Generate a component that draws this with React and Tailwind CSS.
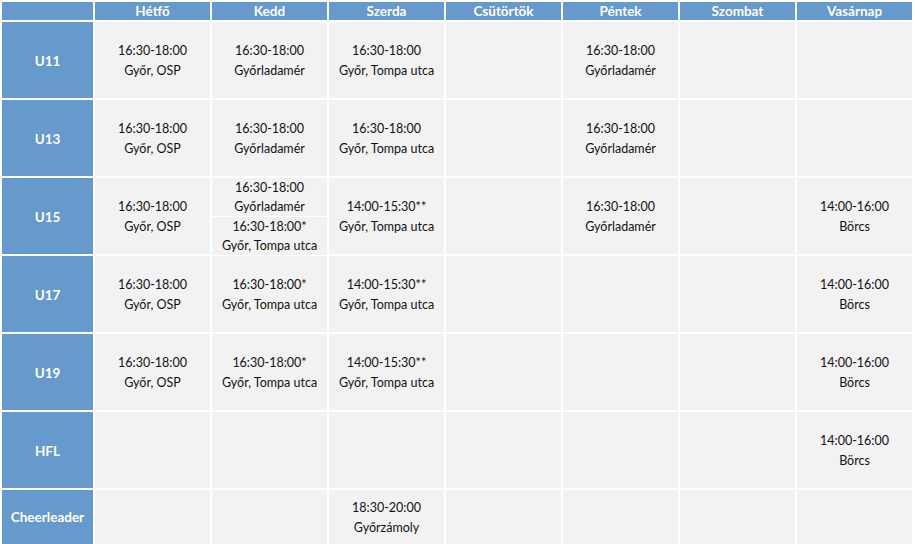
import React from "react";

const days = ["Hétfő", "Kedd", "Szerda", "Csütörtök", "Péntek", "Szombat", "Vasárnap"];

const OSP = ["16:30-18:00", "Győr, OSP"];
const LAD = ["16:30-18:00", "Győrladamér"];
const TOMPA = ["16:30-18:00", "Győr, Tompa utca"];
const TOMPA1 = ["16:30-18:00*", "Győr, Tompa utca"];
const TOMPA2 = ["14:00-15:30**", "Győr, Tompa utca"];
const BORCS = ["14:00-16:00", "Börcs"];

// each row: team + 7 day cells (null = empty, array of lines, or {split: [...]})
const rows = [
  { team: "U11", cells: [OSP, LAD, TOMPA, null, LAD, null, null] },
  { team: "U13", cells: [OSP, LAD, TOMPA, null, LAD, null, null] },
  { team: "U15", cells: [OSP, { split: [LAD, TOMPA1] }, TOMPA2, null, LAD, null, BORCS] },
  { team: "U17", cells: [OSP, TOMPA1, TOMPA2, null, null, null, BORCS] },
  { team: "U19", cells: [OSP, TOMPA1, TOMPA2, null, null, null, BORCS] },
  { team: "HFL", cells: [null, null, null, null, null, null, BORCS] },
  { team: "Cheerleader", cells: [null, null, ["18:30-20:00", "Győrzámoly"], null, null, null, null] },
];

const Lines = ({ lines, tight }) => (
  <div className={tight ? "flex flex-col items-center" : "flex flex-col items-center pt-[2px]"}>
    {lines.map((l) => (
      <span
        key={l}
        className={tight ? "leading-[19px] whitespace-nowrap" : "leading-[20px] whitespace-nowrap"}
      >
        {l}
      </span>
    ))}
  </div>
);

const Cell = ({ value }) => {
  if (value && value.split) {
    return (
      <div className="flex flex-col bg-white gap-px">
        {value.split.map((v, i) => (
          <div key={i} className="flex-1 flex items-center justify-center bg-[#f2f2f2]">
            <Lines lines={v} tight />
          </div>
        ))}
      </div>
    );
  }
  return (
    <div className="flex items-center justify-center bg-[#f2f2f2]">
      {value && <Lines lines={value} />}
    </div>
  );
};

export default function App() {
  return (
    <div
      className="w-[915px] h-[544px] overflow-hidden bg-white text-[12.5px] text-[#111]"
      style={{ fontFamily: "Lato, 'Open Sans', sans-serif" }}
    >
      <div className="grid grid-cols-[91px_repeat(7,115px)] grid-rows-[18px_repeat(6,76px)_54px] gap-[2px] pt-[2px] pl-[2px]">
        <div className="bg-[#6699cc]" />
        {days.map((d) => (
          <div
            key={d}
            className="bg-[#6699cc] text-white font-bold text-[13.5px] flex items-center justify-center"
          >
            {d}
          </div>
        ))}

        {rows.map((r) => (
          <React.Fragment key={r.team}>
            <div
              className={
                r.team === "Cheerleader"
                  ? "bg-[#6699cc] text-white font-bold text-[13.5px] flex items-center justify-center"
                  : "bg-[#6699cc] text-white font-bold text-[13.5px] flex items-center justify-center pt-[2px]"
              }
            >
              {r.team}
            </div>
            {r.cells.map((c, i) => (
              <Cell key={i} value={c} />
            ))}
          </React.Fragment>
        ))}
      </div>
    </div>
  );
}
